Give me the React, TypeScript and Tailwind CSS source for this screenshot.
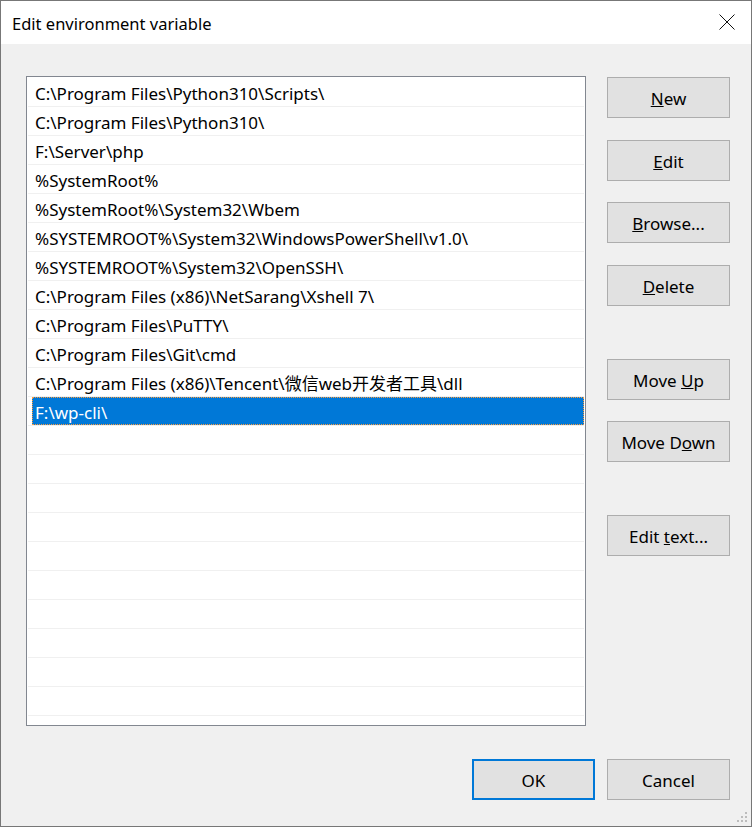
import React from "react";

const items = [
  "C:\\Program Files\\Python310\\Scripts\\",
  "C:\\Program Files\\Python310\\",
  "F:\\Server\\php",
  "%SystemRoot%",
  "%SystemRoot%\\System32\\Wbem",
  "%SYSTEMROOT%\\System32\\WindowsPowerShell\\v1.0\\",
  "%SYSTEMROOT%\\System32\\OpenSSH\\",
  "C:\\Program Files (x86)\\NetSarang\\Xshell 7\\",
  "C:\\Program Files\\PuTTY\\",
  "C:\\Program Files\\Git\\cmd",
  "C:\\Program Files (x86)\\Tencent\\微信web开发者工具\\dll",
  "F:\\wp-cli\\",
];

const font = {
  fontFamily: '"Noto Sans", "Noto Sans CJK SC", sans-serif',
};

function Btn({
  children,
  className = "",
  primary = false,
}: {
  children: React.ReactNode;
  className?: string;
  primary?: boolean;
}) {
  return (
    <div
      className={
        "w-[123px] h-[41px] flex items-center justify-center bg-[#e1e1e1] text-[17px] leading-none text-black pt-[1px] " +
        (primary ? "border-2 border-[#0078d7] " : "border border-[#adadad] ") +
        className
      }
    >
      {children}
    </div>
  );
}

export default function App() {
  const rows = Array.from({ length: 22 }, (_, i) => items[i] ?? "");
  return (
    <div
      className="w-[752px] h-[827px] border border-[#777777] flex flex-col bg-[#f0f0f0] text-black"
      style={font}
    >
      <div className="h-[43px] bg-white flex items-center justify-between pl-[11px] pr-[16px] shrink-0">
        <span className="text-[16.5px] leading-none pt-[3px]">Edit environment variable</span>
        <svg width="16" height="16" viewBox="0 0 16 16" className="mt-[-1px]">
          <path d="M0.5 0.5 L15.5 15.5 M15.5 0.5 L0.5 15.5" stroke="#111" strokeWidth="1" fill="none" />
        </svg>
      </div>
      <div className="flex-1 flex flex-col relative">
        <div className="flex pt-[32px] pl-[25px]">
          <div className="w-[560px] h-[650px] border border-[#828790] bg-white px-[1px] pt-[1px] overflow-hidden">
            {rows.map((t, i) => {
              const sel = i === 11;
              return (
                <div
                  key={i}
                  className="h-[29px] border-b border-[#f0f0f0] flex"
                >
                  <div
                    className={
                      "flex-1 flex items-center text-[17px] leading-none pt-[3px] whitespace-nowrap " +
                      (sel
                        ? "bg-[#0078d7] text-white ml-[4px] pl-[2px] border border-dotted border-[#f89c40]"
                        : "pl-[7px]")
                    }
                  >
                    {t}
                  </div>
                </div>
              );
            })}
          </div>
          <div className="ml-[21px] flex flex-col pt-[1px]">
            <Btn>
              <span><u>N</u>ew</span>
            </Btn>
            <Btn className="mt-[22px]">
              <span><u>E</u>dit</span>
            </Btn>
            <Btn className="mt-[21px]">
              <span><u>B</u>rowse...</span>
            </Btn>
            <Btn className="mt-[22px]">
              <span><u>D</u>elete</span>
            </Btn>
            <Btn className="mt-[53px]">
              <span>Move <u>U</u>p</span>
            </Btn>
            <Btn className="mt-[21px]">
              <span>Move D<u>o</u>wn</span>
            </Btn>
            <Btn className="mt-[53px]">
              <span>Edit <u>t</u>ext...</span>
            </Btn>
          </div>
        </div>
        <div className="flex justify-end gap-[12px] pr-[21px] mt-[33px]">
          <Btn primary>OK</Btn>
          <Btn>Cancel</Btn>
        </div>
        <svg
          width="12"
          height="12"
          viewBox="0 0 12 12"
          className="absolute right-[2px] bottom-[2px]"
        >
          <g fill="#bcbcbc">
            <rect x="8" y="0" width="2" height="2" />
            <rect x="4" y="4" width="2" height="2" />
            <rect x="8" y="4" width="2" height="2" />
            <rect x="0" y="8" width="2" height="2" />
            <rect x="4" y="8" width="2" height="2" />
            <rect x="8" y="8" width="2" height="2" />
          </g>
        </svg>
      </div>
    </div>
  );
}
